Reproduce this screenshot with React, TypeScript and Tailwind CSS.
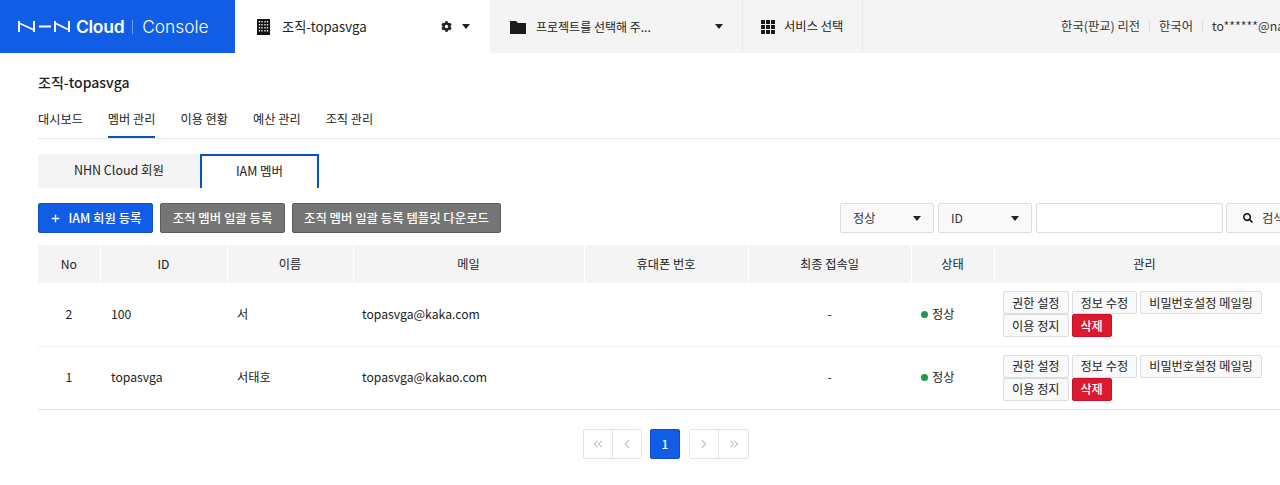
import { ChevronLeft, ChevronRight, ChevronsLeft, ChevronsRight, Plus } from "lucide-react";
import { FaCog, FaSearch } from "react-icons/fa";

const FONT = "font-['Noto_Sans_CJK_KR','Noto_Sans',sans-serif]";

const MEMBERS = [
  { no: 2, id: "100", name: "서", mail: "topasvga@kaka.com" },
  { no: 1, id: "topasvga", name: "서태호", mail: "topasvga@kakao.com" },
];

const COLUMNS = [
  { label: "No", width: "w-[62px]" },
  { label: "ID", width: "w-[127px]" },
  { label: "이름", width: "w-[126px]" },
  { label: "메일", width: "w-[231px]" },
  { label: "휴대폰 번호", width: "w-[164px]" },
  { label: "최종 접속일", width: "w-[163px]" },
  { label: "상태", width: "w-[83px]" },
  { label: "관리", width: "w-[301px]" },
];

function Caret({ className = "" }: { className?: string }) {
  return (
    <svg width="8" height="5" viewBox="0 0 8 5" className={className}>
      <path d="M0 0h8L4 5z" fill="#222" />
    </svg>
  );
}

function Logo() {
  return (
    <svg width="52" height="13" viewBox="0 0 52 13" className="shrink-0">
      <g fill="none" stroke="#fff">
        <path d="M1 1v11M16 1v11M37 1v11M51 1v11" strokeWidth="2" />
        <path d="M2 3.5l13 6M38 3.5l12 6" strokeWidth="1.6" />
        <path d="M21 6.5h12" strokeWidth="2" />
      </g>
    </svg>
  );
}

function ActionButton({ label }: { label: string }) {
  return (
    <button className="h-[23px] rounded-[2px] border border-[#ddd] bg-[#f9f9f9] px-2 text-[12.2px] leading-none text-[#222]">
      {label}
    </button>
  );
}

function Select({ label }: { label: string }) {
  return (
    <div className="flex h-[30px] w-[94px] items-center justify-between rounded-[2px] border border-[#ddd] bg-[#f9f9f9] px-[12px] text-[12.2px] text-[#333]">
      {label}
      <Caret />
    </div>
  );
}

function PageButton({ children, className = "" }: { children: React.ReactNode; className?: string }) {
  return <div className={`flex h-[30px] w-[30px] items-center justify-center border border-[#e3e3e3] bg-white text-[#c4c4c4] ${className}`}>{children}</div>;
}

export default function App() {
  return (
    <div className={`h-[485px] w-[1280px] overflow-hidden bg-white text-[#222] ${FONT}`}>
      <header className="flex h-[53px] text-[12.3px]">
        <div className="flex w-[235px] items-center bg-[#125de6] pl-[18px] font-['Inter',sans-serif] text-white">
          <Logo />
          <span className="ml-[6px] text-[17.5px] leading-none font-semibold tracking-[-0.3px]">Cloud</span>
          <span className="ml-[8px] h-[14px] w-px bg-[#6f9bf0]" />
          <span className="ml-[9px] text-[17.3px] leading-none font-light">Console</span>
        </div>
        <div className="flex w-[255px] items-center bg-white pr-[20px] pl-[22px]">
          <svg width="13" height="16" viewBox="0 0 13 16">
            <path fill="#111" d="M0 0h13v16H0z" />
            <path stroke="#fff" strokeWidth="1.3" strokeDasharray="1.6 1.4" fill="none" d="M2.5 2v12M5 2v12M8 2v12M10.5 2v12" />
          </svg>
          <span className="ml-[12px] text-[13.2px]">조직-topasvga</span>
          <FaCog className="ml-auto" size={11} color="#222" />
          <Caret className="ml-[10px]" />
        </div>
        <div className="flex w-[253px] items-center border-r border-[#e8e8e8] bg-[#f4f4f4] pr-[19px] pl-[20px]">
          <svg width="16" height="14" viewBox="0 0 16 14">
            <path fill="#1a1a1a" d="M0 1h6l2 2h8v11H0z" />
          </svg>
          <span className="ml-[10px] text-[12px]">프로젝트를 선택해 주...</span>
          <Caret className="ml-auto" />
        </div>
        <div className="flex w-[120px] items-center gap-[9px] border-r border-[#e8e8e8] bg-[#f4f4f4] pl-[18px]">
          <svg width="14" height="14" viewBox="0 0 14 14" fill="#1a1a1a">
            <path d="M0 0h4v4H0zM5 0h4v4H5zM10 0h4v4h-4zM0 5h4v4H0zM5 5h4v4H5zM10 5h4v4h-4zM0 10h4v4H0zM5 10h4v4H5zM10 10h4v4h-4z" />
          </svg>
          서비스 선택
        </div>
        <div className="flex flex-1 items-center justify-end overflow-hidden bg-[#f4f4f4] whitespace-nowrap text-[#333]">
          <span>한국(판교) 리전</span>
          <span className="mx-[9px] h-[12px] w-px bg-[#ddd]" />
          <span>한국어</span>
          <span className="mx-[9px] h-[12px] w-px bg-[#ddd]" />
          <span className="w-[68px] overflow-hidden">to******@naver.com</span>
        </div>
      </header>

      <main className="w-[1330px] pl-[38px]">
        <h1 className="mt-[19px] text-[14px] leading-[20px] font-medium">조직-topasvga</h1>
        <nav className="mt-[18px] flex gap-[25px] border-b border-[#e8e8e8] text-[12.2px]">
          <a className="h-[28px] leading-[18px]">대시보드</a>
          <a className="h-[28px] border-b-2 border-[#0a50c8] leading-[18px]">멤버 관리</a>
          <a className="h-[28px] leading-[18px]">이용 현황</a>
          <a className="h-[28px] leading-[18px]">예산 관리</a>
          <a className="h-[28px] leading-[18px]">조직 관리</a>
        </nav>

        <div className="mt-[15px] flex h-[34px] text-[12.5px]">
          <div className="flex w-[162px] items-center justify-center bg-[#f4f4f4] pb-[2px]">NHN Cloud 회원</div>
          <div className="flex w-[119px] items-center justify-center border-x-2 border-t-2 border-[#0a50c8] bg-white pb-[1px]">IAM 멤버</div>
        </div>

        <div className="mt-[15px] flex h-[30px] w-[1269px] items-center text-[12.4px]">
          <button className="flex h-[30px] w-[115px] items-center justify-center gap-[8px] rounded-[2px] border border-[#0a50c8] bg-[#125de6] font-medium text-white">
            <Plus size={11} strokeWidth={3} />
            IAM 회원 등록
          </button>
          <button className="ml-[7px] h-[30px] w-[125px] rounded-[2px] border border-[#5c5c5c] bg-[#757575] font-medium text-white">조직 멤버 일괄 등록</button>
          <button className="ml-[7px] h-[30px] w-[209px] rounded-[2px] border border-[#5c5c5c] bg-[#757575] font-medium text-white">조직 멤버 일괄 등록 템플릿 다운로드</button>
          <div className="ml-auto flex gap-[4px]">
            <Select label="정상" />
            <Select label="ID" />
            <div className="h-[30px] w-[187px] rounded-[2px] border border-[#ddd] bg-white" />
            <button className="-ml-px flex h-[30px] w-[81px] items-center gap-[9px] rounded-[2px] border border-[#ddd] bg-[#f9f9f9] pl-[16px] text-[#333]">
              <FaSearch size={10} color="#111" />
              검색
            </button>
          </div>
        </div>

        <table className="mt-[12px] w-[1257px] table-fixed border-collapse text-[12.2px]">
          <thead>
            <tr className="h-[38px] bg-[#f4f4f4]">
              {COLUMNS.map((col) => (
                <th key={col.label} className={`${col.width} border-r border-white font-normal`}>
                  {col.label}
                </th>
              ))}
            </tr>
          </thead>
          <tbody>
            {MEMBERS.map((m) => (
              <tr key={m.no} className="h-[63px] border-b border-[#eee] last:border-[#e2e2e2]">
                <td className="text-center">{m.no}</td>
                <td className="pl-[11px]">{m.id}</td>
                <td className="pl-[10px]">{m.name}</td>
                <td className="pl-[9px]">{m.mail}</td>
                <td />
                <td className="text-center">-</td>
                <td className="pl-[10px]">
                  <span className="flex items-center gap-[4px]">
                    <span className="h-[7px] w-[7px] rounded-full bg-[#1e9b4a]" />
                    정상
                  </span>
                </td>
                <td className="pl-[9px]">
                  <div className="flex w-[270px] flex-wrap gap-x-[3px]">
                    <ActionButton label="권한 설정" />
                    <ActionButton label="정보 수정" />
                    <ActionButton label="비밀번호설정 메일링" />
                    <ActionButton label="이용 정지" />
                    <button className="h-[23px] w-[40px] rounded-[2px] border border-[#c8102a] bg-[#dc1a2e] text-[12.2px] leading-none font-medium text-white">삭제</button>
                  </div>
                </td>
              </tr>
            ))}
          </tbody>
        </table>

        <div className="mt-[19px] flex w-[1256px] justify-center">
          <div className="flex">
            <PageButton className="rounded-l-[2px]"><ChevronsLeft size={14} /></PageButton>
            <PageButton className="-ml-px rounded-r-[2px]"><ChevronLeft size={14} /></PageButton>
            <div className="mr-[9px] ml-[8px] flex h-[30px] w-[30px] items-center justify-center rounded-[2px] border border-[#0a50c8] bg-[#125de6] text-[12px] font-medium text-white">1</div>
            <PageButton className="rounded-l-[2px]"><ChevronRight size={14} /></PageButton>
            <PageButton className="rounded-r-[2px] border-l-0"><ChevronsRight size={14} /></PageButton>
          </div>
        </div>
      </main>
    </div>
  );
}
